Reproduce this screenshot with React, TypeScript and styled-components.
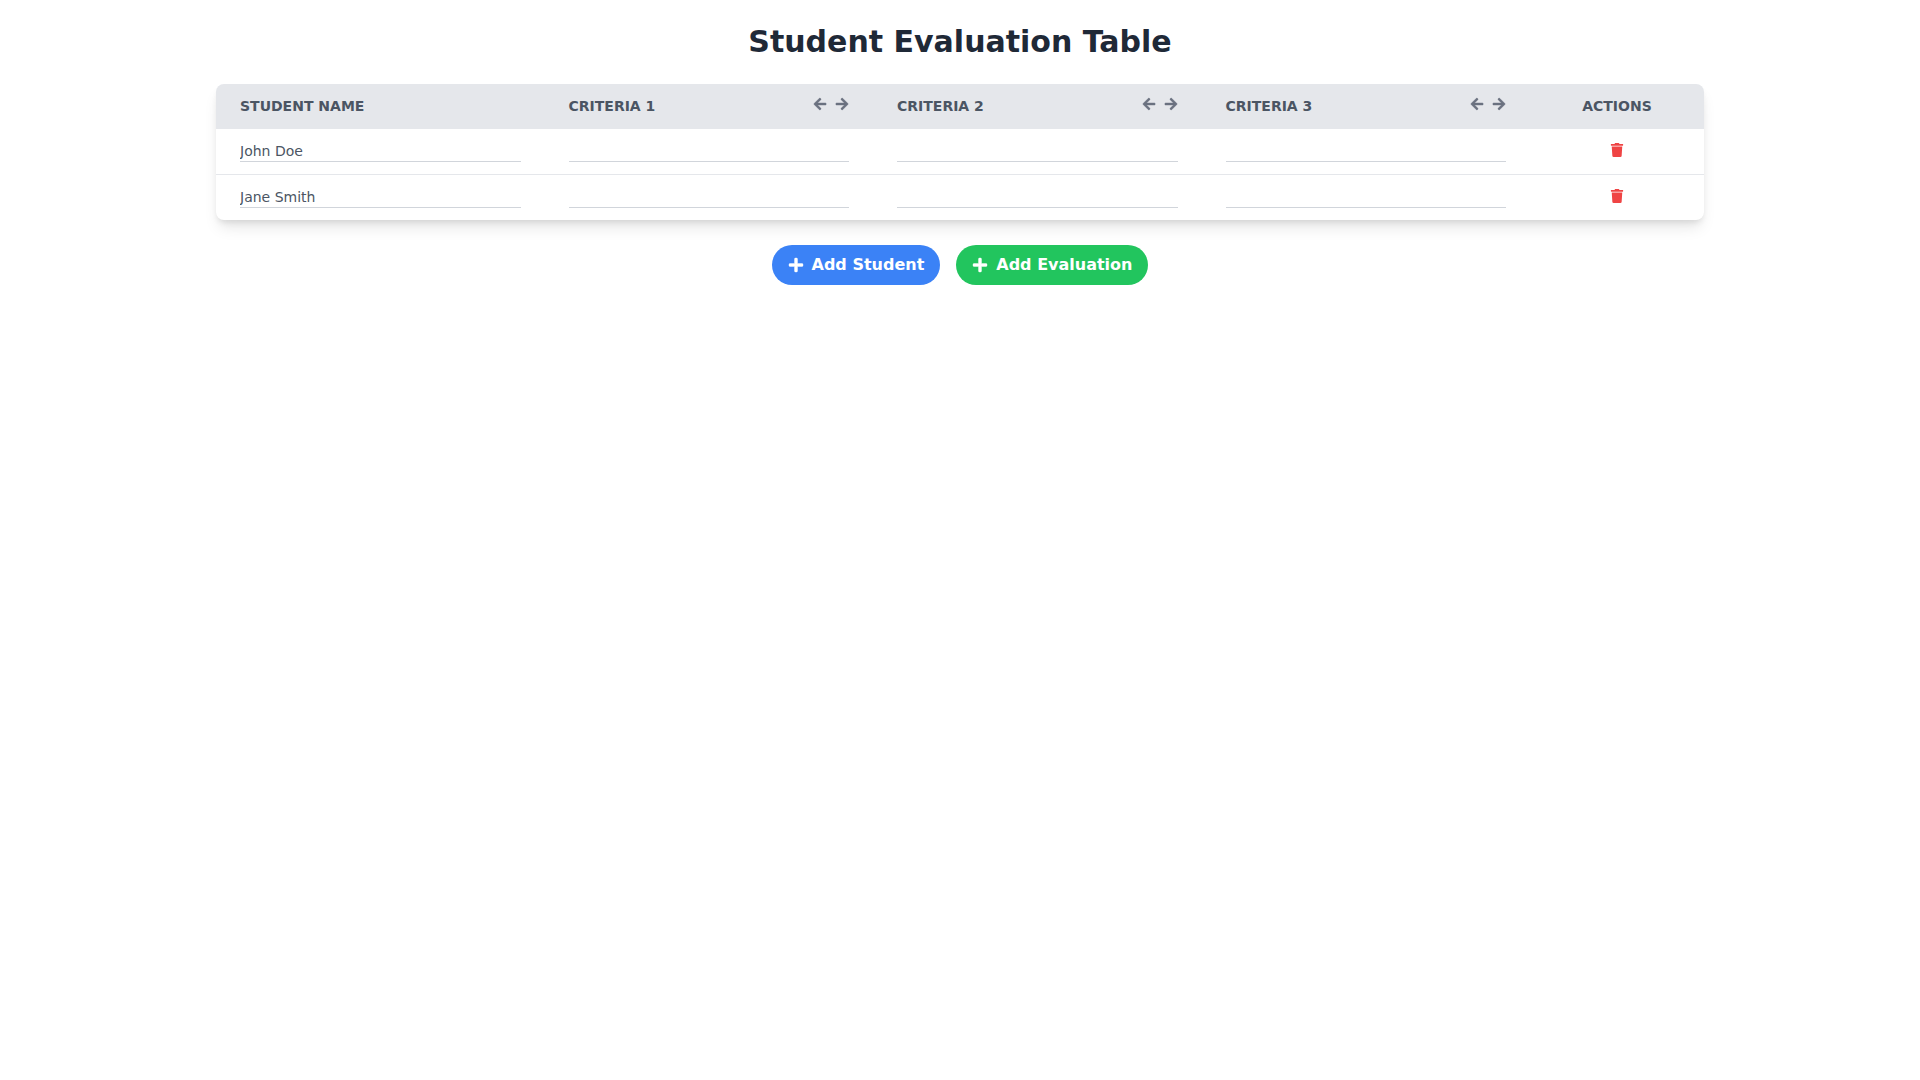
import React from "react";
import styled, { createGlobalStyle } from "styled-components";
import { FaArrowLeft, FaArrowRight, FaPlus, FaTrash } from "react-icons/fa";

const FONT = `"DejaVu Sans", sans-serif`;

const Global = createGlobalStyle`
  * { box-sizing: border-box; }
  html, body { margin: 0; background: #fff; }
  body { font-family: ${FONT}; }
`;

const Page = styled.div`
  padding: 24px 216px;
`;
const Title = styled.h1`
  margin: 0 0 24px;
  font-size: 30px;
  line-height: 36px;
  font-weight: 700;
  color: #1f2937;
  text-align: center;
`;
const Card = styled.div`
  border-radius: 8px;
  overflow: hidden;
  background: #fff;
  box-shadow: 0 10px 15px -3px rgba(0,0,0,.1), 0 4px 6px -2px rgba(0,0,0,.1);
`;
const Table = styled.table`
  width: 100%;
  border-collapse: collapse;
  table-layout: fixed;
`;
const HeadRow = styled.tr`
  background: #e5e7eb;
`;
const Th = styled.th`
  height: 45px;
  padding: 12px 24px 13px;
  line-height: 20px;
  vertical-align: top;
  font-size: 14px;
  font-weight: 700;
  text-align: left;
  color: #4b5563;
  text-transform: uppercase;
`;
const ActionTh = styled(Th)`
  text-align: center;
`;
const HeadInner = styled.div`
  display: flex;
  justify-content: space-between;
  align-items: center;
`;
const Arrows = styled.div`
  display: flex;
  gap: 8px;
  color: #6b7280;
  font-size: 14px;
  margin-top: -5px;
`;
const ArrowButton = styled.span`
  display: inline-flex;
  align-items: center;
  width: 14px;
  height: 14px;
  svg { stroke: currentColor; stroke-width: 14; }
`;
const Row = styled.tr`
  border-bottom: 1px solid #e5e7eb;
  &:last-child { border-bottom: 0; }
`;
const Td = styled.td`
  padding: 12px 24px;
  vertical-align: top;
`;
const ActionTd = styled(Td)`
  text-align: center;
  color: #ef4444;
  font-size: 14px;
  line-height: 20px;
`;
const TrashWrap = styled.span`
  display: block;
  height: 21px;
  padding-top: 1px;
`;
const Field = styled.input`
  display: block;
  width: 100%;
  height: 21px;
  padding: 0;
  border: 0;
  border-bottom: 1px solid #d1d5db;
  outline: 0;
  background: transparent;
  font: 14px/20px ${FONT};
  color: #4b5563;
`;
const Buttons = styled.div`
  display: flex;
  justify-content: center;
  gap: 16px;
  margin-top: 25px;
`;
const Pill = styled.button<{ $bg: string }>`
  display: inline-flex;
  align-items: center;
  gap: 8px;
  height: 40px;
  padding: 0 16px;
  border: 0;
  border-radius: 9999px;
  background: ${(p) => p.$bg};
  color: #fff;
  font: 700 16px/24px ${FONT};
  svg { stroke: currentColor; stroke-width: 12; }
`;

const rows = ["John Doe", "Jane Smith"];
const criteria = ["Criteria 1", "Criteria 2", "Criteria 3"];

export default function App() {
  return (
    <Page>
      <Global />
      <Title>Student Evaluation Table</Title>
      <Card>
        <Table>
          <colgroup>
            <col style={{ width: 328.5 }} />
            <col style={{ width: 328.5 }} />
            <col style={{ width: 328.5 }} />
            <col style={{ width: 328.5 }} />
            <col />
          </colgroup>
          <thead>
            <HeadRow>
              <Th>Student Name</Th>
              {criteria.map((c) => (
                <Th key={c}>
                  <HeadInner>
                    {c}
                    <Arrows>
                      <ArrowButton><FaArrowLeft /></ArrowButton>
                      <ArrowButton><FaArrowRight /></ArrowButton>
                    </Arrows>
                  </HeadInner>
                </Th>
              ))}
              <ActionTh>Actions</ActionTh>
            </HeadRow>
          </thead>
          <tbody>
            {rows.map((r) => (
              <Row key={r}>
                <Td><Field defaultValue={r} /></Td>
                {criteria.map((c) => (
                  <Td key={c}><Field /></Td>
                ))}
                <ActionTd><TrashWrap><FaTrash /></TrashWrap></ActionTd>
              </Row>
            ))}
          </tbody>
        </Table>
      </Card>
      <Buttons>
        <Pill $bg="#3b82f6"><FaPlus />Add Student</Pill>
        <Pill $bg="#22c55e"><FaPlus />Add Evaluation</Pill>
      </Buttons>
    </Page>
  );
}
